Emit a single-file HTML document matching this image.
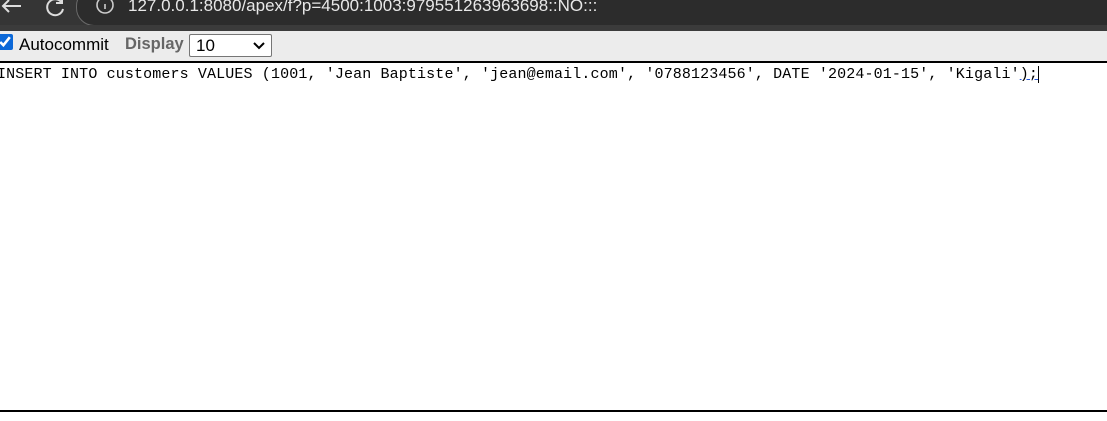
<!DOCTYPE html>
<html><head><style>
body{margin:0;width:1107px;height:421px;overflow:hidden;background:#fff;position:relative;font-family:"Liberation Sans",sans-serif}
.top{position:absolute;left:0;top:0;width:1107px;height:25px;background:#353535}
.addr{position:absolute;left:76px;top:-12px;width:1100px;height:36px;border:1px solid #6a6a6a;border-radius:18px;background:#2c2c2c}
.url{position:absolute;left:128px;top:-4px;color:#e8e8e8;font-size:17px;letter-spacing:0}
.sep{position:absolute;left:0;top:25px;width:1107px;height:6px;background:#3b3b3b}
.bar{position:absolute;left:0;top:31px;width:1107px;height:30px;background:#ececec}
.line1{position:absolute;left:0;top:61px;width:1107px;height:2px;background:#000}
.line2{position:absolute;left:0;top:410px;width:1107px;height:2px;background:#000}
.sql{position:absolute;left:-3px;top:64px;font-family:"Liberation Mono",monospace;font-size:15px;letter-spacing:0.13px;color:#000;white-space:pre;line-height:21px}
</style></head><body>
<div class="top">
<svg style="position:absolute;left:0;top:0" width="24" height="18"><path d="M21 6H3M9 0L3 6l6 6" stroke="#ddd" stroke-width="2" fill="none"/></svg>
<svg style="position:absolute;left:44px;top:0" width="24" height="18"><path d="M18 3A8 8 0 1 0 19 9M18 -3v6h-6" stroke="#ddd" stroke-width="2" fill="none"/></svg>
</div>
<div class="addr"></div>
<svg style="position:absolute;left:95px;top:0" width="20" height="16"><circle cx="10" cy="5" r="8" stroke="#ccc" stroke-width="1.6" fill="none"/><path d="M10 4v5" stroke="#ccc" stroke-width="1.6"/></svg>
<div class="url">127.0.0.1:8080/apex/f?p=4500:1003:979551263963698::NO:::</div>
<div class="sep"></div>
<div class="bar">
<input type="checkbox" checked style="position:absolute;left:-3px;top:3px;margin:0;width:16px;height:16px;accent-color:#0b68d8">
<span style="position:absolute;left:19px;top:4px;font-size:17px;color:#000">Autocommit</span>
<span style="position:absolute;left:125px;top:4px;font-size:16.5px;color:#666;font-weight:bold">Display</span>
<div style="position:absolute;left:189px;top:3px;width:83px;height:23px;border:1px solid #767676;border-radius:2px;background:#fff;box-sizing:border-box">
<span style="position:absolute;left:6px;top:1px;font-size:17px">10</span>
<svg style="position:absolute;left:63px;top:7px" width="12" height="8"><path d="M1 1l5 5 5-5" stroke="#000" stroke-width="2" fill="none"/></svg>
</div>
</div>
<div class="line1"></div>
<div class="sql">INSERT INTO customers VALUES (1001, 'Jean Baptiste', 'jean@email.com', '0788123456', DATE '2024-01-15', 'Kigali'<span style="text-decoration:underline;text-decoration-color:#2255dd">);</span><span style="border-left:1px solid #000"></span></div>
<div class="line2"></div>
</body></html>
